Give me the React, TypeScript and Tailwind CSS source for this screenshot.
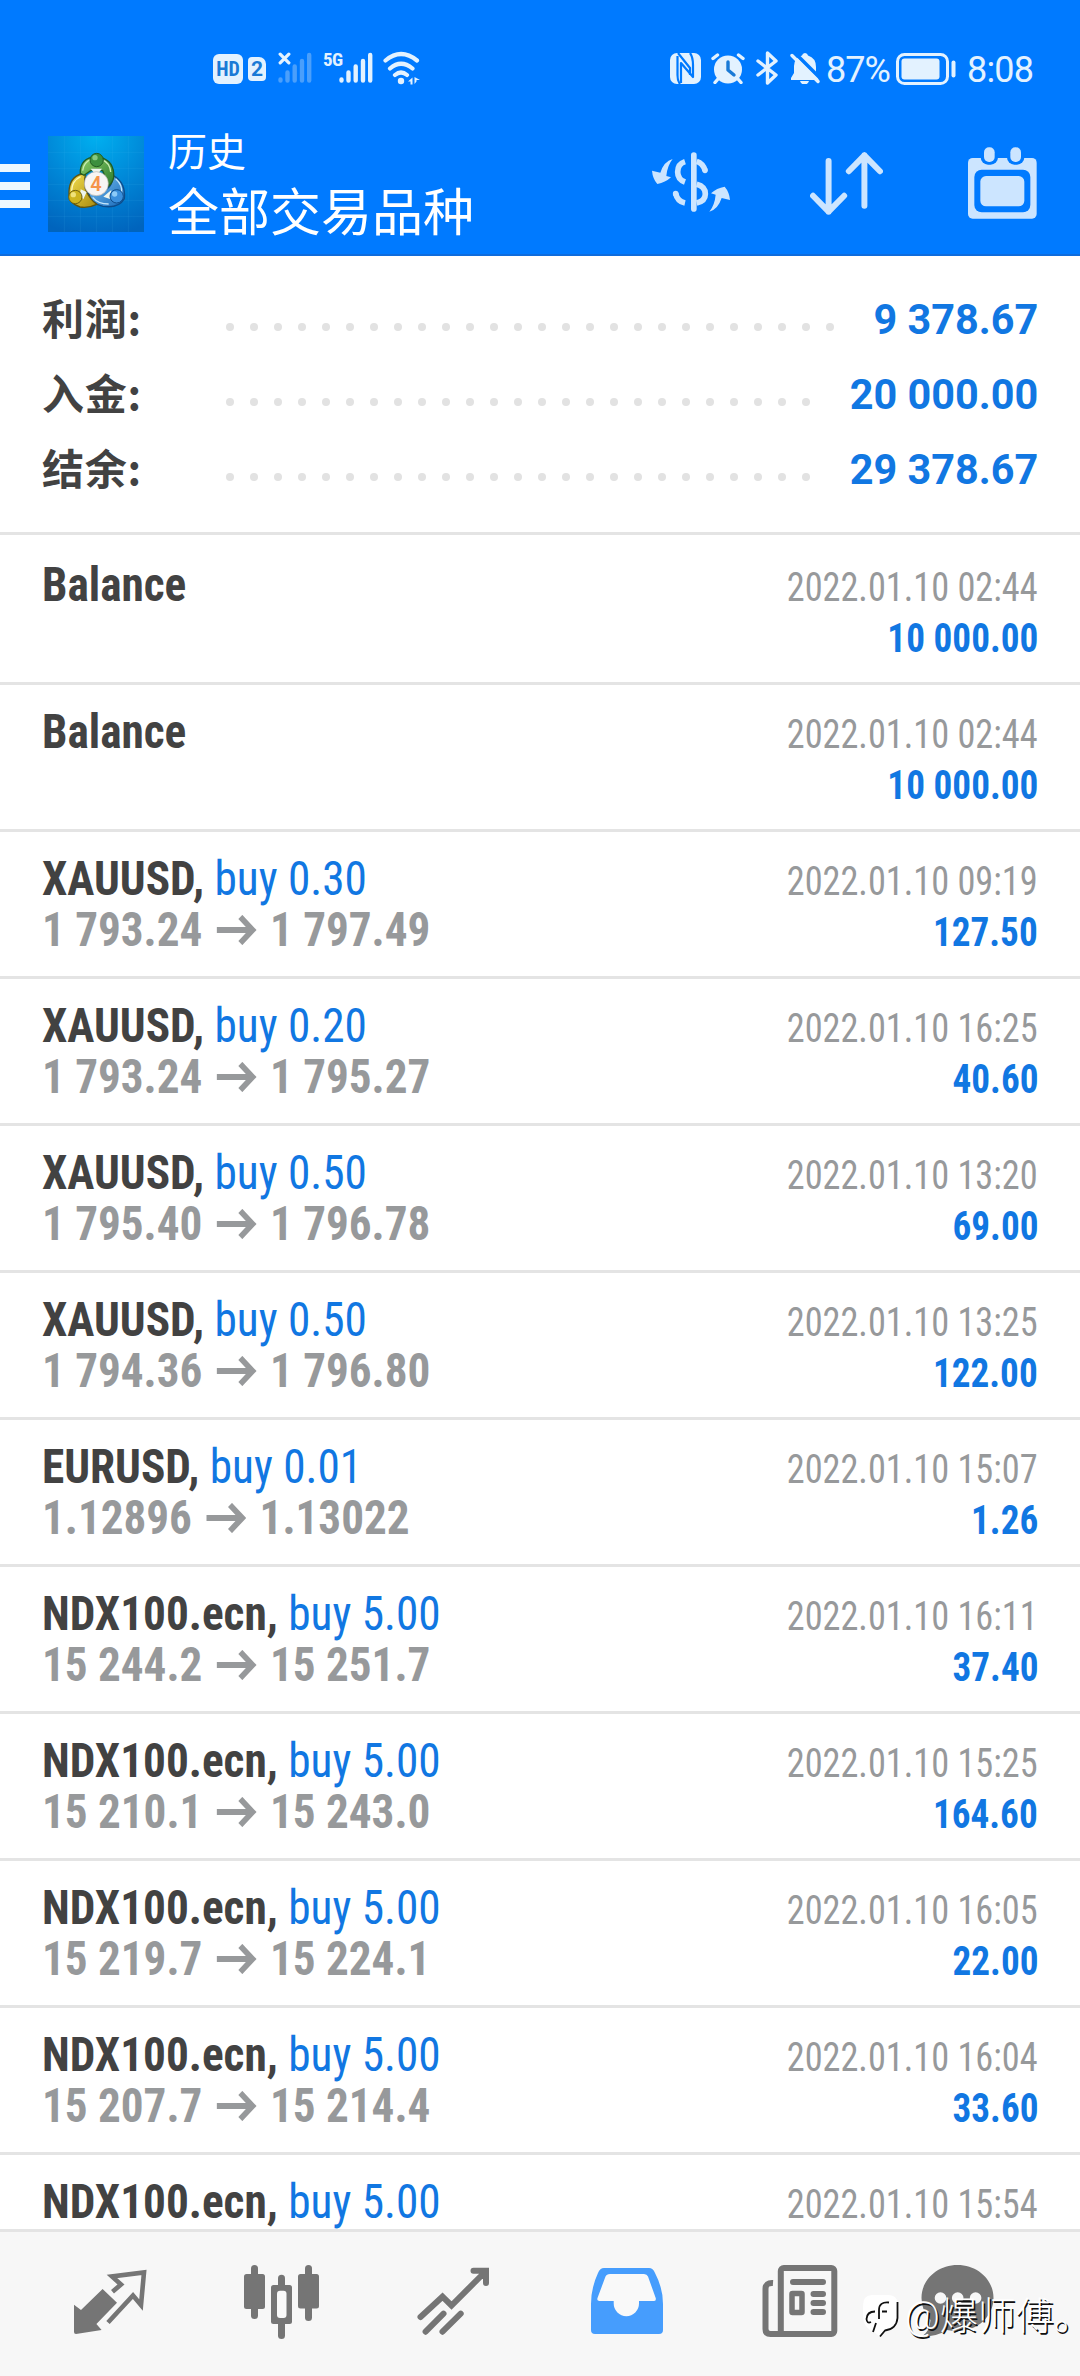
import type { ReactNode } from 'react';

interface Deal {
  symbol: string;
  volume?: string;
  open?: string;
  close?: string;
  time: string;
  profit: string;
}

const deals: Deal[] = [
  { symbol: 'Balance', time: '2022.01.10 02:44', profit: '10 000.00' },
  { symbol: 'Balance', time: '2022.01.10 02:44', profit: '10 000.00' },
  { symbol: 'XAUUSD', volume: '0.30', open: '1 793.24', close: '1 797.49', time: '2022.01.10 09:19', profit: '127.50' },
  { symbol: 'XAUUSD', volume: '0.20', open: '1 793.24', close: '1 795.27', time: '2022.01.10 16:25', profit: '40.60' },
  { symbol: 'XAUUSD', volume: '0.50', open: '1 795.40', close: '1 796.78', time: '2022.01.10 13:20', profit: '69.00' },
  { symbol: 'XAUUSD', volume: '0.50', open: '1 794.36', close: '1 796.80', time: '2022.01.10 13:25', profit: '122.00' },
  { symbol: 'EURUSD', volume: '0.01', open: '1.12896', close: '1.13022', time: '2022.01.10 15:07', profit: '1.26' },
  { symbol: 'NDX100.ecn', volume: '5.00', open: '15 244.2', close: '15 251.7', time: '2022.01.10 16:11', profit: '37.40' },
  { symbol: 'NDX100.ecn', volume: '5.00', open: '15 210.1', close: '15 243.0', time: '2022.01.10 15:25', profit: '164.60' },
  { symbol: 'NDX100.ecn', volume: '5.00', open: '15 219.7', close: '15 224.1', time: '2022.01.10 16:05', profit: '22.00' },
  { symbol: 'NDX100.ecn', volume: '5.00', open: '15 207.7', close: '15 214.4', time: '2022.01.10 16:04', profit: '33.60' },
  { symbol: 'NDX100.ecn', volume: '5.00', time: '2022.01.10 15:54', profit: '' },
];

const totals = [
  { label: '利润:', value: '9 378.67', dots: 26 },
  { label: '入金:', value: '20 000.00', dots: 25 },
  { label: '结余:', value: '29 378.67', dots: 25 },
];

function SignalBars({ className }: { className: string }) {
  return (
    <svg viewBox="0 0 34 32" className={className} stroke="currentColor" strokeWidth="4.4" strokeLinecap="round">
      <path d="M2.5 28.5v-1M9.5 28.5v-8M16.7 28.5v-14M24 28.5V9M31.2 28.5V3" />
    </svg>
  );
}

function StatusBar() {
  return (
    <div className="h-[92px] pt-[50px] pl-[213px] pr-[46px] flex justify-between text-[#e3f2ff]">
      <div className="flex h-[36px]">
        <div className="mt-1 w-[30px] h-[30px] rounded-[6px] bg-[#e3f2ff] text-[#1a7ad6] text-[20px] leading-[31px] font-bold font-stretch-condensed text-center">HD</div>
        <div className="mt-[7px] ml-[5px] w-[18px] h-[24px] rounded-[4px] rounded-tr-[7px] bg-[#e3f2ff] text-[#1a7ad6] text-[21px] leading-[25px] font-bold text-center">2</div>
        <div className="relative ml-[12px] mt-[2px] w-[34px]">
          <SignalBars className="w-[34px] h-[32px] text-[#4a9ffb]" />
          <svg viewBox="0 0 12 12" className="absolute left-0 top-0 w-[13px] h-[13px]" stroke="currentColor" strokeWidth="3" strokeLinecap="round">
            <path d="M2 2l8 8M10 2l-8 8" />
          </svg>
        </div>
        <div className="ml-[11px] w-[16px] text-[19px] leading-[20px] font-bold font-stretch-condensed tracking-[-0.5px]">5G</div>
        <SignalBars className="ml-0 mt-[2px] w-[34px] h-[32px]" />
        <svg viewBox="0 0 38 34" className="ml-[10px] mt-[1px] w-[38px] h-[34px]" fill="none" stroke="currentColor" strokeWidth="4.2" strokeLinecap="round">
          <path d="M2.5 9.500Q18 -3.500 34 9.500M7 17.500Q18 8 29.500 17.500M12 24Q18 19 24 24" />
          <circle cx="18" cy="30" r="3.200" fill="currentColor" stroke="none" />
          <path d="M29.500 26.500v7h-2v-3h-2.500zM31.500 26v7l2-2.500v-1.500h3.500z" fill="currentColor" stroke="none" />
        </svg>
      </div>
      <div className="flex h-[36px]">
        <svg viewBox="0 0 31 31" className="mt-[3px] w-[31px] h-[31px]">
          <rect width="31" height="31" rx="7" fill="currentColor" />
          <g fill="none" stroke="#007aff" strokeWidth="2.200" strokeLinejoin="round">
            <path d="M11 30V10L23 24V12Q23 4 20 0" />
            <path d="M8 0L20 15V22M7.500 3V22Q7.500 28 10 31" />
          </g>
        </svg>
        <svg viewBox="0 0 34 31" className="ml-[10px] mt-[3px] w-[34px] h-[31px]">
          <circle cx="17" cy="16.500" r="14" fill="currentColor" />
          <path d="M2 5.500L6.500 2M32 5.500L27.500 2M7 26l-3 3.500M27 26l3 3.500" stroke="currentColor" strokeWidth="3.400" strokeLinecap="round" />
          <path d="M17 9v8l6 5" stroke="#1a7ad6" strokeWidth="3.400" strokeLinecap="round" strokeLinejoin="round" fill="none" />
        </svg>
        <svg viewBox="0 0 22 34" className="ml-[11px] mt-[1px] w-[22px] h-[34px]" fill="none" stroke="currentColor" strokeWidth="3.400" strokeLinecap="round" strokeLinejoin="round">
          <path d="M2 10l18 14-8.500 8V2L20 10 2 24" />
        </svg>
        <svg viewBox="0 0 30 32" className="ml-[12px] mt-[2px] w-[30px] h-[32px]">
          <path d="M15 1q2.500 0 3 2.500Q26 6 26 15v5l2.500 6v2H1v-2l3-5v-7q0-8 8-10.500Q12.500 1 15 1z" fill="currentColor" />
          <path d="M10 29h9q-1 3.500-4.500 3.500T10 29z" fill="currentColor" />
          <path d="M5 1l26 26" stroke="#007aff" strokeWidth="3.500" />
          <path d="M2 3.500L28 29.500" stroke="currentColor" strokeWidth="3.400" strokeLinecap="round" />
        </svg>
        <div className="ml-[6px] w-[65px] text-[36px] leading-[40px] tracking-[-1px] whitespace-nowrap">87%</div>
        <svg viewBox="0 0 60 32" className="ml-[5px] mt-[3px] w-[60px] h-[32px]">
          <rect x="1.500" y="1.500" width="50" height="29" rx="7" fill="none" stroke="currentColor" strokeWidth="3" />
          <rect x="5.500" y="5.500" width="38" height="21" rx="3" fill="currentColor" />
          <path d="M57.500 9.500v13" stroke="currentColor" strokeWidth="4" strokeLinecap="round" />
        </svg>
        <div className="ml-[11px] w-[67px] text-[36px] leading-[40px] tracking-[-0.8px] whitespace-nowrap">8:08</div>
      </div>
    </div>
  );
}

function AppLogo() {
  return (
    <svg viewBox="0 0 288 288" className="w-[96px] h-[96px] shrink-0">
      <defs>
        <radialGradient id="sky" cx="0.5" cy="0" r="1.05">
          <stop offset="0" stopColor="#00b0f0" />
          <stop offset="0.5" stopColor="#0088d8" />
          <stop offset="1" stopColor="#0064bd" />
        </radialGradient>
        <linearGradient id="green" x1="0" y1="0" x2="1" y2="1">
          <stop offset="0" stopColor="#8fd06a" />
          <stop offset="1" stopColor="#2a7a2c" />
        </linearGradient>
        <linearGradient id="yellow" x1="0" y1="0" x2="1" y2="1">
          <stop offset="0" stopColor="#f5e04e" />
          <stop offset="1" stopColor="#a88a10" />
        </linearGradient>
        <linearGradient id="blue" x1="0" y1="0" x2="1" y2="1">
          <stop offset="0" stopColor="#7cc4f5" />
          <stop offset="1" stopColor="#1668b8" />
        </linearGradient>
      </defs>
      <rect width="288" height="288" fill="url(#sky)" />
      <path d="M0 49h288M0 97h288M0 145h288M0 193h288M0 241h288M49 0v288M97 0v288M145 0v288M193 0v288M241 0v288" stroke="#4fb8ee" strokeOpacity="0.18" strokeWidth="2" />
      <path d="M195 118Q234 140 229 188Q212 218 165 211Q128 203 122 172L166 160Q192 160 195 118z" fill="url(#blue)" stroke="#0d4d8c" strokeWidth="4" />
      <path d="M203 128Q224 146 221 172M134 184Q150 204 182 204" stroke="#c4e6fb" strokeWidth="4" fill="none" />
      <path d="M100 114Q64 124 63 168Q62 202 96 213Q122 217 146 205Q128 192 116 168Q106 150 112 116z" fill="url(#yellow)" stroke="#5f5410" strokeWidth="4" />
      <path d="M98 122Q72 134 71 164" stroke="#fbf6b8" strokeWidth="4" fill="none" />
      <path d="M97 112Q95 66 145 62Q194 68 197 112Q200 134 182 150L164 104H128L108 118z" fill="url(#green)" stroke="#225c22" strokeWidth="4" />
      <path d="M104 104Q107 78 130 70M160 70Q186 80 188 108" stroke="#c9ecb4" strokeWidth="4" fill="none" />
      <path d="M128 98h34l-8 10h-18zM98 160l18 8-10 22-10-12zM190 162l-24 20 22 8z" fill="#eef5ee" />
      <circle cx="146" cy="72" r="20" fill="#3c8f3e" stroke="#225c22" strokeWidth="3" />
      <circle cx="141" cy="65" r="8" fill="#86c880" />
      <circle cx="82" cy="183" r="20" fill="#cdb41f" stroke="#6d600f" strokeWidth="3" />
      <circle cx="76" cy="176" r="8" fill="#f0e27a" />
      <circle cx="206" cy="181" r="20" fill="#3a8fdc" stroke="#0d4d8c" strokeWidth="3" />
      <circle cx="200" cy="174" r="8" fill="#8ccbf8" />
      <circle cx="145" cy="143" r="36" fill="#f7f5f4" stroke="#b9b4ac" strokeWidth="2" />
      <text x="144" y="164" fontSize="60" fontWeight="600" textAnchor="middle" fill="#f5944a">4</text>
    </svg>
  );
}

function Header() {
  return (
    <header className="h-[256px] bg-[#007aff] border-b-2 border-[#0f6cdc]">
      <StatusBar />
      <div className="h-[162px] flex items-start text-white">
        <div className="mt-[72px] w-[30px] flex flex-col gap-[10px]">
          <span className="h-2 bg-[#eef8ff]" />
          <span className="h-2 bg-[#eef8ff]" />
          <span className="h-2 bg-[#eef8ff]" />
        </div>
        <div className="mt-[44px] ml-[18px]">
          <AppLogo />
        </div>
        <div className="ml-[24px] mt-[37px] w-[484px]">
          <p className="text-[39px] leading-[48px]">历史</p>
          <p className="text-[51px] leading-[74px]">全部交易品种</p>
        </div>
        <div className="flex text-[#cce5ff]">
          <svg viewBox="0 0 234 180" className="mt-[60px] w-[78px] h-[60px]" fill="none" stroke="currentColor" strokeWidth="17">
            <path d="M125.500 9v162" strokeLinecap="round" />
            <path d="M99 29Q77 36 77 60Q77 82 99 90M134 97Q160 104 160 126Q160 147 134 153" />
            <path d="M99 153Q76 148 71 124M134 28Q153 34 159 55" />
            <circle cx="71" cy="125" r="8.500" fill="currentColor" stroke="none" />
            <circle cx="159" cy="55" r="8.500" fill="currentColor" stroke="none" />
            <path d="M62 21Q36 28 25 62L0 56Q2 80 16 96Q40 92 57 76L43 72Q46 40 62 21zM172 179Q198 172 209 138L234 144Q232 120 218 104Q194 108 177 124L191 128Q188 160 172 179z" fill="currentColor" stroke="none" />
          </svg>
          <svg viewBox="0 0 220 190" className="mt-[60px] ml-[80px] w-[73px] h-[63px]" fill="none" stroke="currentColor" strokeWidth="18" strokeLinecap="round" strokeLinejoin="round">
            <path d="M56 27v153M9 132l47 48 47-48M164 162V10M117 58l47-48 47 48" />
          </svg>
          <svg viewBox="0 0 207 214" className="mt-[55px] ml-[85px] w-[69px] h-[72px]">
            <rect y="32" width="206" height="182" rx="14" fill="currentColor" />
            <rect x="38" y="-10" width="52" height="62" rx="22" fill="#007aff" />
            <rect x="117" y="-10" width="52" height="62" rx="22" fill="#007aff" />
            <rect x="48" width="32" height="44" rx="15" fill="currentColor" />
            <rect x="127" width="32" height="44" rx="15" fill="currentColor" />
            <rect x="19" y="67" width="168" height="128" rx="22" fill="#007aff" />
            <rect x="37" y="86" width="132" height="91" rx="17" fill="currentColor" />
          </svg>
        </div>
      </div>
    </header>
  );
}

function Summary() {
  return (
    <section className="h-[279px] pt-[26px] px-[42px] border-b-[3px] border-[#e4e4e4]">
      {totals.map((t) => (
        <div key={t.label} className="h-[75px] flex items-center">
          <span className="w-[184px] pb-[6px] text-[42px] leading-[69px] tracking-[0.8px] font-bold text-[#424242] font-['Noto_Sans_CJK_SC',sans-serif]">{t.label}</span>
          <span className="mt-[14px] flex gap-4">
            {Array.from({ length: t.dots }, (_, i) => (
              <span key={i} className="w-2 h-2 rounded-full bg-[#e2e2e2]" />
            ))}
          </span>
          <span className="ml-auto text-[42px] leading-[75px] font-bold text-[#1177e2] origin-right scale-x-[0.985]">{t.value}</span>
        </div>
      ))}
    </section>
  );
}

function Arrow() {
  return (
    <svg viewBox="0 0 42 30" className="inline-block w-[44px] h-[30px] mx-[14px] align-[1px]" fill="none" stroke="currentColor" strokeWidth="6">
      <path d="M0 15h38M25 2l13 13-13 13" />
    </svg>
  );
}

function DealRow({ deal }: { deal: Deal }) {
  return (
    <li className="h-[147px] pt-[21px] px-[42px] border-b-[3px] border-[#e4e4e4] font-stretch-condensed leading-[51px] whitespace-nowrap">
      <div className="h-[51px] flex items-baseline justify-between">
        <p className="text-[48px] font-bold text-[#424242] origin-left scale-x-[0.943]">
          {deal.symbol}
          {deal.volume && <>, <span className="font-normal text-[#1177e2]">buy {deal.volume}</span></>}
        </p>
        <p className="text-[40px] text-[#97999b] origin-right scale-x-[0.907]">{deal.time}</p>
      </div>
      <div className="h-[51px] flex items-baseline justify-between">
        <p className="text-[48px] font-bold text-[#97999b] origin-left scale-x-[0.94]">
          {deal.open ? <>{deal.open}<Arrow />{deal.close}</> : '\u00a0'}
        </p>
        <p className="text-[40px] font-bold text-[#1177e2] origin-right scale-x-[0.93]">{deal.profit}</p>
      </div>
    </li>
  );
}

function NavIcon({ children }: { children: ReactNode }) {
  return (
    <div className="flex-1 flex justify-center">
      <svg viewBox="0 0 80 80" className="w-20 h-20" fill="none" stroke="currentColor">
        {children}
      </svg>
    </div>
  );
}

function BottomNav() {
  return (
    <nav className="h-[147px] border-t-[3px] border-[#e4e4e4] bg-[#f7f7f7] text-[#757575] flex items-center pl-6">
      <div className="w-[860px] flex">
        <NavIcon>
          <path d="M4 40.700L11 46L32.600 25L47 38.700L26.400 60L31.600 66L6 70Q4 70 4 68z" fill="currentColor" stroke="none" />
          <path d="M42.500 27.700L51 20.500L42 12.500L74 8.500L71 41L63 31.500L38 58.500" strokeWidth="4.600" />
        </NavIcon>
        <NavIcon>
          <g fill="currentColor" stroke="none">
            <rect x="2" y="10" width="21" height="35" rx="2.500" />
            <rect x="9" y="1" width="7" height="54" rx="3.500" />
            <rect x="36" y="10.700" width="7" height="64.300" rx="3.500" />
            <rect x="29" y="21" width="21" height="39" rx="2.500" />
            <rect x="35" y="26.700" width="9.500" height="27.300" rx="3" fill="#f9f9f9" />
            <rect x="56" y="10" width="21" height="34.500" rx="2.500" />
            <rect x="63" y="1" width="7" height="56" rx="3.500" />
          </g>
        </NavIcon>
        <NavIcon>
          <path d="M6.500 53L28.500 32.700L37.500 41.500L71 8M59.500 6.700H72V19M11.600 67.700L29.500 49.700M28.500 67.700L46.700 49.700" strokeWidth="6" strokeLinecap="round" />
        </NavIcon>
        <NavIcon>
          <path d="M18 4H63Q67 4 69 9Q77 24 77 40V66Q77 70 73 70H9Q5 70 5 66V40Q5 24 12 9Q14 4 18 4z" fill="#469dfd" stroke="none" />
          <path d="M24 10H58Q61 10 62 12.500L69.700 34Q70.500 37 67.500 37H53V39.500A12.600 12.600 0 0 1 27.700 39.500V37H13.500Q10.500 37 11.500 34L19.500 12.500Q20.500 10 24 10z" fill="#f9f9f9" stroke="none" />
        </NavIcon>
        <NavIcon>
          <rect x="22.800" y="4" width="53.500" height="66" rx="3" strokeWidth="6" />
          <path d="M15 19Q7.500 18.500 7.500 25V65Q7.500 70 12.500 70H26" strokeWidth="6" />
          <path d="M35 18h30M55.500 30h9.500M55.500 39h9.500M55.500 48h9.500" strokeWidth="6" strokeLinecap="round" />
          <rect x="34" y="29.500" width="10" height="19" rx="0.500" strokeWidth="5.500" strokeLinejoin="round" />
        </NavIcon>
      </div>
      <div className="w-[148px] flex">
        <NavIcon>
          <path d="M39.500 1C60 1 75.500 16 75.500 34S60 67 39.500 67Q34 67 29 66Q18 73 4 72.500Q12 67 12.500 56Q3.500 47 3.500 34C3.500 16 19 1 39.500 1z" fill="currentColor" stroke="none" />
          <g fill="#f7f7f7" stroke="none">
            <circle cx="22.500" cy="34" r="5.800" />
            <circle cx="39.700" cy="34" r="5.800" />
            <circle cx="57.600" cy="34" r="5.800" />
          </g>
        </NavIcon>
      </div>
    </nav>
  );
}

function Watermark() {
  return (
    <div className="absolute left-[862px] bottom-[38px] flex items-center text-white whitespace-nowrap">
      <svg viewBox="0 0 37 44" className="w-[37px] h-[44px] shrink-0">
        <path d="M10 1H26Q36 1 36 12V24Q35 35 24 36L18 43L12 38Q1 34 1 22V12Q1 1 10 1z" fill="#fff" />
        <path d="M27 8.500Q17 7.500 17 16V25M13 17.500Q5 17.500 4.500 25Q5 30 9 28M20 17.500h5M14 29L11 38M35.500 8V24Q34.500 35 23 36.500L18 42.500" stroke="#111" strokeWidth="1.800" fill="none" />
      </svg>
      <span className="ml-[6px] text-[38px] leading-[44px] font-light [text-shadow:1.5px_1.5px_0.5px_#111]">@爆师傅。</span>
    </div>
  );
}

export default function App() {
  return (
    <div className="relative w-[1080px] h-[2376px] overflow-hidden flex flex-col bg-white font-[Roboto,'Noto_Sans_CJK_SC',sans-serif]">
      <Header />
      <Summary />
      <ul className="flex-1 min-h-0 overflow-hidden pt-[3px]">
        {deals.map((deal, i) => (
          <DealRow key={i} deal={deal} />
        ))}
      </ul>
      <BottomNav />
      <Watermark />
    </div>
  );
}
